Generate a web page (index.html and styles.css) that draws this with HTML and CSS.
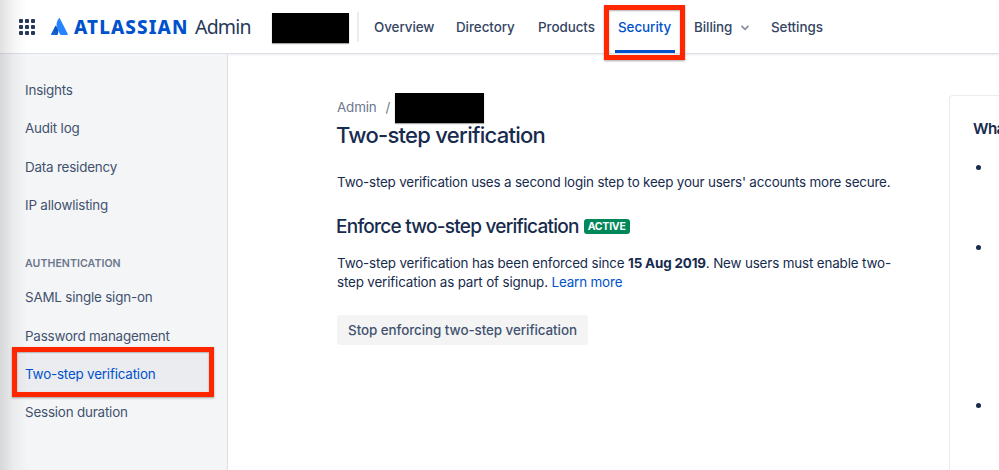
FILE: index.html
```html
<!DOCTYPE html>
<html lang="en">
<head>
  <meta charset="UTF-8">
  <meta name="viewport" content="width=device-width, initial-scale=1.0">
  <title>Two-step verification - Atlassian Admin</title>
  <link rel="stylesheet" href="styles.css">
</head>
<body>
  <header class="topbar">
    <svg class="switcher" width="16" height="16" viewBox="0 0 16 16" fill="#253858">
      <rect x="0" y="0" width="4" height="4" rx="1"/><rect x="6" y="0" width="4" height="4" rx="1"/><rect x="12" y="0" width="4" height="4" rx="1"/>
      <rect x="0" y="6" width="4" height="4" rx="1"/><rect x="6" y="6" width="4" height="4" rx="1"/><rect x="12" y="6" width="4" height="4" rx="1"/>
      <rect x="0" y="12" width="4" height="4" rx="1"/><rect x="6" y="12" width="4" height="4" rx="1"/><rect x="12" y="12" width="4" height="4" rx="1"/>
    </svg>
    <div class="brand">
      <svg class="brand-mark" width="17" height="17" viewBox="0 0 17 17">
        <defs>
          <linearGradient id="markShade" x1="1" y1="0" x2="0.3" y2="1">
            <stop offset="0" stop-color="#0747a6"/>
            <stop offset="1" stop-color="#1868db"/>
          </linearGradient>
        </defs>
        <path fill="url(#markShade)" d="M5.100 7.900c-.25-.3-.6-.25-.8.1L.1 16.100c-.2.400 0 .8.500.8h5.600c.2 0 .4-.1.500-.3 1.200-2.500.7-6.300-1.600-8.700z"/>
        <path fill="#2684ff" d="M7.900.3C5.200 3.900 4.900 7.900 6.500 11.200l2.700 5.300c.1.200.3.400.6.400h6.500c.5 0 .7-.4.500-.8L8.800.3c-.2-.4-.6-.4-.9 0z"/>
      </svg>
      <span class="brand-name">ATLASSIAN</span>
      <span class="brand-product">Admin</span>
    </div>
    <div class="redacted org-name"></div>
    <nav class="nav">
      <a class="overview">Overview</a>
      <a class="directory">Directory</a>
      <a class="products">Products</a>
      <a class="security active">Security</a>
      <a class="billing">Billing
        <svg width="10" height="6" viewBox="0 0 10 6" fill="none" stroke="#8993a4" stroke-width="1.8" stroke-linecap="round" stroke-linejoin="round"><path d="M2 1.300l3 3 3-3"/></svg>
      </a>
      <a class="settings">Settings</a>
    </nav>
  </header>

  <div class="page">
    <aside class="sidebar">
      <ul class="menu">
        <li>Insights</li>
        <li>Audit log</li>
        <li>Data residency</li>
        <li>IP allowlisting</li>
      </ul>
      <h4>Authentication</h4>
      <ul class="menu">
        <li>SAML single sign-on</li>
        <li>Password management</li>
        <li class="selected">Two-step verification</li>
        <li>Session duration</li>
      </ul>
    </aside>

    <main class="content">
      <div class="breadcrumbs">
        <span>Admin</span>
        <span class="slash">/</span>
        <div class="redacted crumb"></div>
      </div>
      <h1>Two-step verification</h1>
      <p class="intro">Two-step verification uses a second login step to keep your users' accounts more secure.</p>
      <div class="section-title">
        <h2>Enforce two-step verification</h2>
        <span class="lozenge">ACTIVE</span>
      </div>
      <p class="status">Two-step verification has been enforced since <b>15 Aug 2019</b>. New users must enable two-<br>step verification as part of signup. <a class="link">Learn more</a></p>
      <button class="btn" type="button">Stop enforcing two-step verification</button>
    </main>

    <section class="info">
      <h3>Wha</h3>
      <ul>
        <li></li>
        <li></li>
        <li></li>
      </ul>
    </section>
  </div>

  <div class="edge-shade"></div>
  <div class="highlight highlight-nav"></div>
  <div class="highlight highlight-menu"></div>
</body>
</html>
```

FILE: styles.css
```css
* {
  box-sizing: border-box;
  margin: 0;
  padding: 0;
}

body {
  width: 999px;
  height: 470px;
  overflow: hidden;
  position: relative;
  font-family: Inter, "Liberation Sans", sans-serif;
  font-size: 13.4px;
  color: #172b4d;
  background: #fff;
}

ul {
  list-style: none;
}

.topbar {
  display: flex;
  align-items: center;
  height: 54px;
  padding-left: 19px;
  border-bottom: 1px solid #dddfe6;
  box-shadow: 0 1px 2px rgba(9, 30, 66, 0.08);
}

.switcher {
  flex: none;
}

.brand {
  display: flex;
  align-items: center;
  width: 221px;
  margin-left: 16px;
  white-space: nowrap;
}

.brand-mark {
  flex: none;
}

.brand-name {
  width: 115px;
  margin-top: 1px;
  margin-left: 6px;
  font-family: "Noto Sans", sans-serif;
  font-size: 18.8px;
  font-weight: 800;
  letter-spacing: 1.1px;
  color: #0052cc;
}

.brand-product {
  margin-left: 6px;
  font-family: "Noto Sans", sans-serif;
  font-size: 19.5px;
  letter-spacing: -0.8px;
  color: #253858;
}

.redacted {
  flex: none;
  background: #000;
  box-shadow: 0 1px 1px rgba(0, 0, 0, 0.35);
}

.org-name {
  width: 77px;
  height: 30px;
  margin-top: 3px;
}

.nav {
  display: flex;
  align-items: center;
  height: 30px;
  margin-left: 8px;
  padding-left: 15px;
  border-left: 2px solid #ebecf0;
  font-weight: 500;
  letter-spacing: -0.05px;
  color: #344563;
  white-space: nowrap;
}

.overview {
  width: 82px;
}

.directory {
  width: 82px;
}

.products {
  width: 80px;
}

.security {
  width: 76px;
}

.billing {
  width: 77px;
}

.billing svg {
  margin-left: 4px;
  vertical-align: 1px;
}

.nav .active {
  position: relative;
  color: #0052cc;
}

.nav .active::after {
  content: "";
  position: absolute;
  left: -3px;
  bottom: -18px;
  width: 60px;
  height: 3px;
  background: #0052cc;
}

.page {
  display: flex;
  height: 416px;
  overflow: hidden;
}

.sidebar {
  flex: none;
  width: 228px;
  padding: 17px 16px 0;
  letter-spacing: -0.19px;
  background: #f4f5f7;
  border-right: 1px solid #dcdfe4;
}

.menu li {
  height: 38.35px;
  padding-left: 9px;
  line-height: 38.35px;
  color: #42526e;
}

.menu .selected {
  color: #0052cc;
  background: #ebecf0;
}

.sidebar h4 {
  padding: 32px 0 7px 9px;
  font-size: 10.6px;
  font-weight: 600;
  letter-spacing: 0.05px;
  line-height: 15px;
  text-transform: uppercase;
  color: #6b778c;
}

.content {
  flex: none;
  width: 612px;
  margin-left: 109px;
  padding-top: 38px;
  letter-spacing: -0.15px;
}

.breadcrumbs {
  display: flex;
  align-items: center;
  height: 31px;
  color: #6b778c;
}

.breadcrumbs span {
  margin-top: -1px;
}

.breadcrumbs .slash {
  margin: -1px 5px 0 9px;
}

.crumb {
  width: 89px;
  height: 30px;
}

h1 {
  margin-top: -1px;
  margin-left: -1px;
  font-size: 22px;
  font-weight: 550;
  letter-spacing: -0.72px;
  line-height: 26px;
}

.intro {
  margin-top: 25px;
  letter-spacing: -0.18px;
  line-height: 19px;
}

.section-title {
  display: flex;
  align-items: center;
  height: 24px;
  margin-top: 22px;
  margin-left: -1px;
}

h2 {
  font-size: 19px;
  font-weight: 550;
  letter-spacing: -0.75px;
}

.lozenge {
  height: 15px;
  margin-left: 5px;
  padding: 0 4px;
  font-size: 10.5px;
  font-weight: 700;
  letter-spacing: -0.25px;
  line-height: 15px;
  color: #fff;
  background: #00875a;
  border-radius: 3px;
}

.status {
  margin-top: 16px;
  line-height: 19px;
  white-space: nowrap;
}

.status b {
  font-weight: 700;
}

.link {
  color: #0052cc;
}

.btn {
  width: 251px;
  height: 30px;
  margin-top: 23px;
  font-family: inherit;
  font-size: 13.4px;
  font-weight: 500;
  letter-spacing: -0.06px;
  white-space: nowrap;
  color: #42526e;
  background: #f4f4f5;
  border: none;
  border-radius: 3px;
}

.info {
  flex: none;
  width: 50px;
  height: 420px;
  margin-top: 41px;
  padding: 23px 0 0 23px;
  border: 1px solid #ebecf0;
  border-right: none;
  border-radius: 4px 0 0 0;
}

.info h3 {
  overflow: hidden;
  font-size: 15.2px;
  font-weight: 600;
  letter-spacing: -0.6px;
  line-height: 20px;
}

.info li {
  height: 80px;
  padding: 0 3px;
}

.info li:first-child {
  margin-top: 26px;
}

.info li:nth-child(2) {
  height: 158px;
}

.info li::before {
  content: "";
  display: block;
  width: 5px;
  height: 5px;
  border-radius: 50%;
  background: #172b4d;
}

/* soft shadow along the left window edge */
.edge-shade {
  position: absolute;
  left: 0;
  top: 0;
  width: 27px;
  height: 470px;
  background: linear-gradient(to right, rgba(0, 0, 0, 0.12), rgba(0, 0, 0, 0.04) 50%, rgba(0, 0, 0, 0));
}

.highlight {
  position: absolute;
  border: 5px solid #ff2600;
  box-shadow: 0 1px 2px rgba(0, 0, 0, 0.35), inset 0 1px 2px rgba(0, 0, 0, 0.3);
}

.highlight-nav {
  left: 604px;
  top: 5px;
  width: 81px;
  height: 55px;
}

.highlight-menu {
  left: 12px;
  top: 347px;
  width: 202px;
  height: 50px;
}
```
